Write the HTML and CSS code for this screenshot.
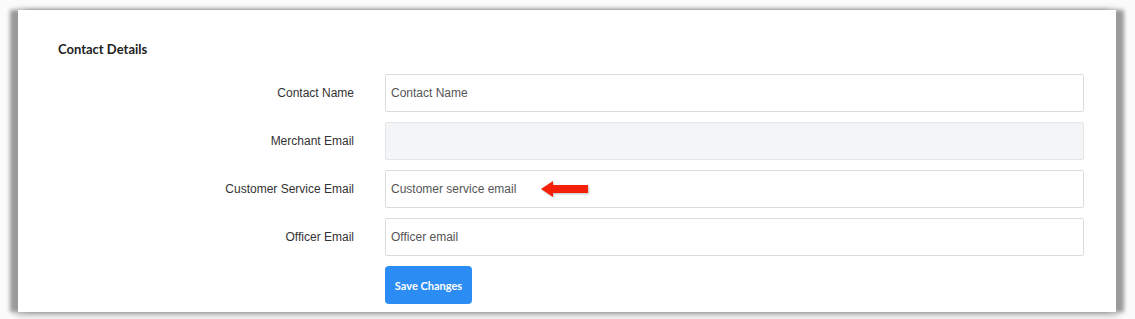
FILE: index.html
```html
<!DOCTYPE html>
<html lang="en">
<head>
    <meta charset="UTF-8">
    <title>Contact Details</title>
    <link rel="stylesheet" href="styles.css">
</head>
<body>
<div class="card">
    <h3 class="card-title">Contact Details</h3>

    <form class="contact-form">
        <label class="field-label" for="contact-name">Contact Name</label>
        <input class="field-input" id="contact-name" type="text" placeholder="Contact Name">

        <label class="field-label" for="merchant-email">Merchant Email</label>
        <input class="field-input" id="merchant-email" type="email" disabled>

        <label class="field-label" for="cs-email">Customer Service Email</label>
        <div class="field-wrap">
            <input class="field-input" id="cs-email" type="email" placeholder="Customer service email">
            <svg class="arrow" width="50" height="20" viewBox="0 0 50 20">
                <polygon points="1,10 13,2 13,6 48,6 48,14 13,14 13,18" fill="#f4200a"/>
            </svg>
        </div>

        <label class="field-label" for="officer-email">Officer Email</label>
        <input class="field-input" id="officer-email" type="email" placeholder="Officer email">

        <span></span>
        <div>
            <button class="btn-save" type="button">Save Changes</button>
        </div>
    </form>
</div>
</body>
</html>
```

FILE: styles.css
```css
body {
    margin: 0;
    padding: 10px 19px 7px 18px;
    background: #fbfbfb;
    font-family: 'Liberation Sans', Arial, sans-serif;
}
.card {
    background: #fff;
    height: 302px;
    box-sizing: border-box;
    padding: 31px 32px 0 40px;
    box-shadow: -8px 0 4px #9a9a9a, 8px 0 4px #9a9a9a, 0 2px 7px 2px #c4c4c4;
}
.card-title {
    margin: 0 0 17px;
    font-family: 'Lato', sans-serif;
    font-size: 13px;
    font-weight: bold;
    color: #222;
    line-height: 16px;
}
.contact-form {
    display: grid;
    grid-template-columns: 296px 1fr;
    column-gap: 31px;
    row-gap: 10px;
    align-items: center;
}
.field-label {
    text-align: right;
    font-size: 12px;
    color: #333;
}
.field-wrap {
    position: relative;
}
.field-input {
    display: block;
    width: 100%;
    box-sizing: border-box;
    height: 38px;
    padding: 0 5px;
    border: 1px solid #dcdcdc;
    border-radius: 2px;
    font-family: 'Liberation Sans', Arial, sans-serif;
    font-size: 12px;
    color: #555;
    background: #fff;
}
.field-input::placeholder {
    color: #555;
}
.field-input:disabled {
    background: #f4f5f7;
    border-color: #e4e5e7;
}
.arrow {
    position: absolute;
    left: 155px;
    top: 9px;
    filter: drop-shadow(1px 1px 1px rgba(0,0,0,0.25));
}
.btn-save {
    width: 87px;
    height: 38px;
    border: none;
    border-radius: 4px;
    background: #2b8cf3;
    color: #fff;
    font-family: 'Lato', sans-serif;
    font-size: 11px;
    font-weight: bold;
}
```
